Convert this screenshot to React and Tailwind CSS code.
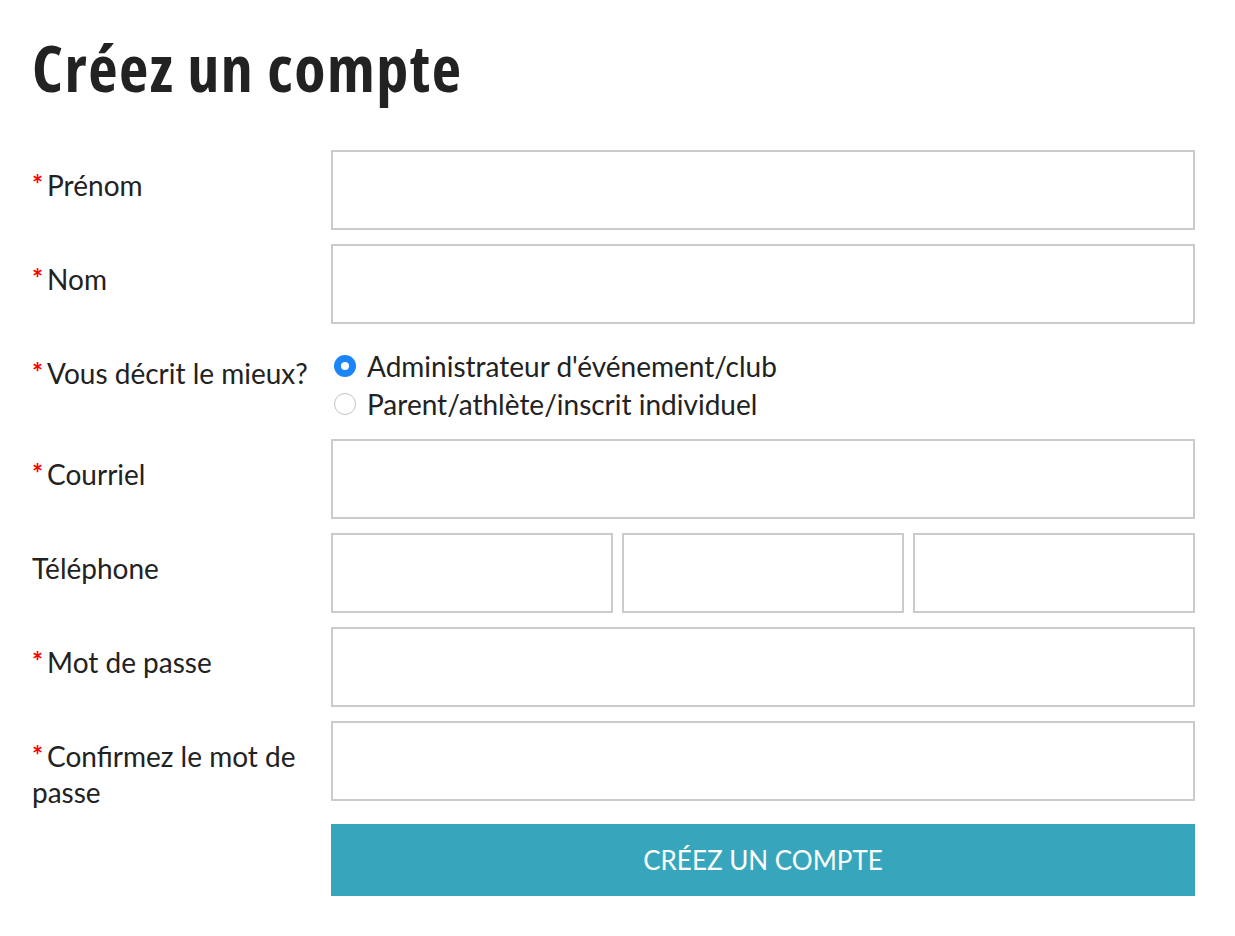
const fields = [
  { label: 'Prénom', required: true },
  { label: 'Nom', required: true },
  { label: 'Vous décrit le mieux?', required: true, type: 'radio' },
  { label: 'Courriel', required: true },
  { label: 'Téléphone', required: false, type: 'phone' },
  { label: 'Mot de passe', required: true },
  { label: 'Confirmez le mot de passe', required: true },
];

function Radio({ checked, label }) {
  return (
    <label className="flex items-center h-[38px] gap-[11px] pl-[3px]">
      {checked ? (
        <span className="w-[22px] h-[22px] rounded-full bg-[#1a84f8] flex items-center justify-center shrink-0">
          <span className="w-[8px] h-[8px] rounded-full bg-white" />
        </span>
      ) : (
        <span className="w-[22px] h-[22px] rounded-full border border-[#c4c4c4] bg-white shrink-0" />
      )}
      <span>{label}</span>
    </label>
  );
}

export default function App() {
  return (
    <div
      className="bg-white min-h-[936px] pl-[32px] pt-[36px] text-[#222] text-[28px] leading-[36px]"
      style={{ fontFamily: 'Lato, "Open Sans", sans-serif' }}
    >
      <h1
        className="text-[64px] leading-[64px] font-bold tracking-[1.5px] text-[#222] [font-stretch:75%]"
        style={{ fontFamily: '"Open Sans", sans-serif' }}
      >
        Créez un compte
      </h1>

      <div className="mt-[50px] grid grid-cols-[299px_864px] gap-y-[14px]">
        {fields.map(f => (
          <div key={f.label} className="contents">
            <div className="pt-[17px] pr-2">
              {f.required && <span className="text-[#ff0000] font-bold text-[26px] leading-none mr-[4px] align-[2px]">*</span>}
              {f.label}
            </div>
            {f.type === 'radio' ? (
              <div className="pt-[9px] pb-[2px]">
                <Radio checked label="Administrateur d'événement/club" />
                <Radio label="Parent/athlète/inscrit individuel" />
              </div>
            ) : f.type === 'phone' ? (
              <div className="grid grid-cols-3 gap-[9px]">
                <input className="h-[80px] border-2 border-[#cbcbcb] outline-none" />
                <input className="h-[80px] border-2 border-[#cbcbcb] outline-none" />
                <input className="h-[80px] border-2 border-[#cbcbcb] outline-none" />
              </div>
            ) : (
              <input className="h-[80px] border-2 border-[#cbcbcb] outline-none" />
            )}
          </div>
        ))}
        <div />
        <button className="h-[72px] bg-[#37a6bd] text-white text-[26px]">
          CRÉEZ UN COMPTE
        </button>
      </div>
    </div>
  );
}
